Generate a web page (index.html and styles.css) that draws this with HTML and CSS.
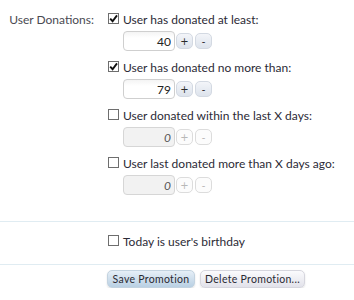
FILE: index.html
```html
<!DOCTYPE html>
<html>
<head>
<meta charset="utf-8">
<link rel="stylesheet" href="styles.css">
</head>
<body>
<form class="xenForm">
  <dl class="ctrlUnit first">
    <dt>User Donations:</dt>
    <dd>
      <div class="opt">
        <label class="check"><span class="box"><svg viewBox="0 0 9 9" width="9" height="9"><path d="M1.2 4.6 L3.6 7.2 L8 1.4" fill="none" stroke="#111" stroke-width="1.9"/></svg></span>User has donated at least:</label>
        <div class="spin"><input class="num" type="text" value="40"><button type="button" class="sb">+</button><button type="button" class="sb">-</button></div>
      </div>
      <div class="opt">
        <label class="check"><span class="box"><svg viewBox="0 0 9 9" width="9" height="9"><path d="M1.2 4.6 L3.6 7.2 L8 1.4" fill="none" stroke="#111" stroke-width="1.9"/></svg></span>User has donated no more than:</label>
        <div class="spin"><input class="num" type="text" value="79"><button type="button" class="sb">+</button><button type="button" class="sb">-</button></div>
      </div>
      <div class="opt">
        <label class="check"><span class="box"></span>User donated within the last X days:</label>
        <div class="spin disabled"><input class="num" type="text" value="0" disabled><button type="button" class="sb" disabled>+</button><button type="button" class="sb" disabled>-</button></div>
      </div>
      <div class="opt">
        <label class="check"><span class="box"></span>User last donated more than X days ago:</label>
        <div class="spin disabled"><input class="num" type="text" value="0" disabled><button type="button" class="sb" disabled>+</button><button type="button" class="sb" disabled>-</button></div>
      </div>
    </dd>
  </dl>
  <dl class="ctrlUnit bday">
    <dt></dt>
    <dd>
      <label class="check"><span class="box"></span>Today is user's birthday</label>
    </dd>
  </dl>
  <dl class="ctrlUnit submit">
    <dt></dt>
    <dd>
      <button type="button" class="btn primary">Save Promotion</button><button type="button" class="btn">Delete Promotion...</button>
    </dd>
  </dl>
</form>
</body>
</html>
```
FILE: styles.css
```css
html, body {
  margin: 0;
  padding: 0;
  background: #ffffff;
}
body {
  font-family: Lato, "Open Sans", "Liberation Sans", sans-serif;
  font-size: 12px;
  color: #2c2a36;
}
.xenForm {
  margin: 0;
}
.ctrlUnit {
  display: grid;
  grid-template-columns: 98px 1fr;
  column-gap: 10px;
  margin: 0;
}
.ctrlUnit dt {
  text-align: right;
  padding-right: 4px;
  line-height: 19px;
  color: #4a4a52;
}
.ctrlUnit dd {
  margin: 0;
}
.first {
  padding-top: 10px;
  padding-bottom: 26px;
  border-bottom: 1px solid #e0ecf2;
}
.opt {
  margin-bottom: 7px;
}
.opt:last-child {
  margin-bottom: 0;
}
.check {
  display: flex;
  align-items: flex-start;
  line-height: 19px;
  white-space: nowrap;
}
.box {
  flex: none;
  box-sizing: border-box;
  width: 11px;
  height: 11px;
  margin-top: 3px;
  margin-right: 4px;
  border: 1px solid #6e6e6e;
  background: #fff;
  display: flex;
  align-items: center;
  justify-content: center;
}
.box svg {
  display: block;
}
.spin {
  display: flex;
  align-items: center;
  margin-top: 2px;
  margin-left: 15px;
  height: 20px;
}
.num {
  box-sizing: border-box;
  width: 52px;
  height: 20px;
  margin: 0;
  padding: 0 3px 0 3px;
  border: 1px solid #cfcfcf;
  border-radius: 4px;
  background: linear-gradient(#f4f4f4, #ffffff 6px);
  font-family: inherit;
  font-size: 12px;
  color: #222;
  text-align: right;
  outline: none;
}
.sb {
  box-sizing: border-box;
  width: 17px;
  height: 16px;
  margin: 0 0 0 1px;
  padding: 0;
  border: 1px solid #d3d9e2;
  border-radius: 5px;
  background: linear-gradient(#f3f5f9, #dde3ec);
  font-family: "DejaVu Sans", sans-serif;
  font-size: 10px;
  line-height: 13px;
  color: #2a2a2a;
  text-align: center;
}
.sb + .sb {
  margin-left: 2px;
}
.spin.disabled .num {
  background: #f2f2f2;
  border-color: #d6d6d6;
  color: #555;
  font-style: italic;
}
.spin.disabled .sb {
  background: #fcfcfc;
  border-color: #dcdcdc;
  color: #b8b8b8;
}
.bday {
  padding-top: 10px;
  padding-bottom: 13px;
  border-bottom: 1px solid #e0ecf2;
}
.submit {
  padding-top: 5px;
}
.submit dd {
  display: flex;
  gap: 5px;
  margin-left: -1px;
}
.btn {
  box-sizing: border-box;
  height: 18px;
  margin: 0;
  padding: 0;
  border: 1px solid #d6d6de;
  border-radius: 5px;
  background: linear-gradient(#fbfbfd, #e2e2ea);
  box-shadow: 0 1px 2px rgba(0,0,0,0.12);
  font-family: Lato, "Open Sans", sans-serif;
  font-size: 10.5px;
  letter-spacing: 0.3px;
  line-height: 16px;
  color: #2a2a33;
  white-space: nowrap;
  text-align: center;
}
.btn.primary {
  width: 88px;
  border-color: #c3d3e0;
  background: linear-gradient(#e6eff7, #b9d0e3);
}
.btn:not(.primary) {
  width: 105px;
}
```
